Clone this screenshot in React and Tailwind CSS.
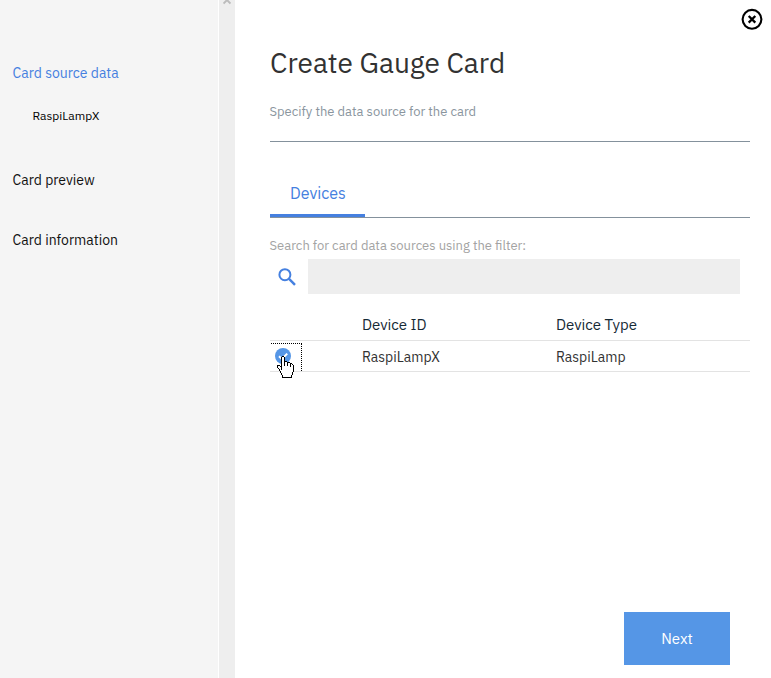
import React from "react";

const CURSOR = [
  ".....XX..........",
  "....XooX.........",
  "....XooX.........",
  "....XooX.........",
  "....XooX.........",
  "....XooXXX.......",
  "....XooXooXXX....",
  "....XooXooXooXX..",
  "....XooXooXooXoX.",
  "XXX.XooXooXooXooX",
  "XooXXooooooooXooX",
  "XoooXoooooooooooX",
  ".XooXoooooooooooX",
  "..XoXoooooooooooX",
  "..XoooooooooooooX",
  "...XooooooooooooX",
  "...XoooooooooooX.",
  "....XooooooooooX.",
  "....XooooooooooX.",
  ".....XooooooooX..",
  ".....XooooooooX..",
  ".....XXXXXXXXXX..",
];

function HandCursor({ className }) {
  return (
    <svg className={className} width="17" height="22" viewBox="0 0 17 22" shapeRendering="crispEdges">
      {CURSOR.flatMap((row, y) =>
        [...row].map((c, x) =>
          c === "." ? null : (
            <rect key={`${x}-${y}`} x={x} y={y} width="1" height="1" fill={c === "X" ? "#000" : "#fff"} />
          )
        )
      )}
    </svg>
  );
}

function Sidebar() {
  return (
    <aside className="w-[218px] bg-[#f5f5f5] pl-[12.5px] pt-[63px] text-[14px] leading-5 text-[#111]">
      <div className="text-[#4580e0]">Card source data</div>
      <div className="mt-[23px] pl-5 text-[12px] text-black">RaspiLampX</div>
      <div className="mt-11">Card preview</div>
      <div className="mt-10">Card information</div>
    </aside>
  );
}

export default function App() {
  return (
    <div className="flex h-[678px] w-[771px] overflow-hidden bg-white font-['IBM_Plex_Sans',Roboto,sans-serif]">
      <Sidebar />
      <div className="ml-px w-4 bg-[#eeeeee]">
        <svg className="ml-[4px]" width="8" height="5" viewBox="0 0 8 5">
          <path d="M0.5 3.6 L4 0.1 L7.5 3.6" fill="none" stroke="#bcbcbc" strokeWidth="2" />
        </svg>
      </div>
      <main className="relative flex flex-1 flex-col pl-[35px] pr-[21px]">
        <svg className="absolute left-[506px] top-[8px]" width="22" height="22" viewBox="0 0 22 22" fill="none" stroke="#000">
          <circle cx="11" cy="11.3" r="9.4" strokeWidth="2.1" />
          <path d="M7.7 8 L14.3 14.6 M14.3 8 L7.7 14.6" strokeWidth="2.3" />
        </svg>
        <h1 className="mt-[43px] h-10 whitespace-nowrap text-[28px] leading-10 text-[#323232]">Create Gauge Card</h1>
        <p className="mt-[19px] -ml-[0.5px] h-5 whitespace-nowrap text-[13px] leading-5 text-[#8a959e]">Specify the data source for the card</p>
        <div className="mt-[19px] h-px bg-[#84919c]" />
        <div className="mt-[30px] flex h-[46px] border-b border-[#84919c]">
          <div className="h-[45px] w-[95px] border-b-[3px] border-[#4580e0] pl-5 pt-[11px] text-[16px] leading-5 text-[#4580e0]">Devices</div>
        </div>
        <p className="mt-[18px] -ml-[0.5px] h-5 whitespace-nowrap text-[13px] leading-5 text-[#a3a3a3]">Search for card data sources using the filter:</p>
        <div className="mt-[3px] flex h-[35px]">
          <svg className="ml-2 mt-[9px]" width="18" height="18" viewBox="0 0 18 18" fill="none" stroke="#4580e0">
            <circle cx="6.9" cy="6.7" r="5.5" strokeWidth="2" />
            <path d="M10.8 10.6 L17 16.8" strokeWidth="2.4" />
          </svg>
          <div className="ml-3 w-[432px] bg-[#eeeeee]" />
        </div>
        <div className="mt-[15px] flex h-8 border-b border-[#e3e3e3] pl-[92px] text-[15px] leading-8 text-[#152935]">
          <div className="w-[194px]">Device ID</div>
          <div>Device Type</div>
        </div>
        <div className="relative flex h-[31px] border-b border-[#e3e3e3] text-[14px] leading-8 text-[#323232]">
          <div className="ml-px mt-[2px] h-7 w-[91px]">
            <div className="h-7 w-[31px] border-r border-t border-dotted border-black pl-1 pt-1">
              <svg width="16" height="16" viewBox="0 0 16 16">
                <circle cx="8" cy="8" r="8" fill="#5596e6" />
                <path d="M4 8.2 L7 11 L12.2 5.6" fill="none" stroke="#fff" strokeWidth="2" />
              </svg>
            </div>
          </div>
          <div className="w-[194px]">RaspiLampX</div>
          <div>RaspiLamp</div>
          <HandCursor className="absolute left-[7px] top-[15px]" />
        </div>
        <button className="ml-[354px] mt-[240px] h-[53px] w-[106px] bg-[#5596e6] pt-px text-[15px] text-white">Next</button>
      </main>
    </div>
  );
}
